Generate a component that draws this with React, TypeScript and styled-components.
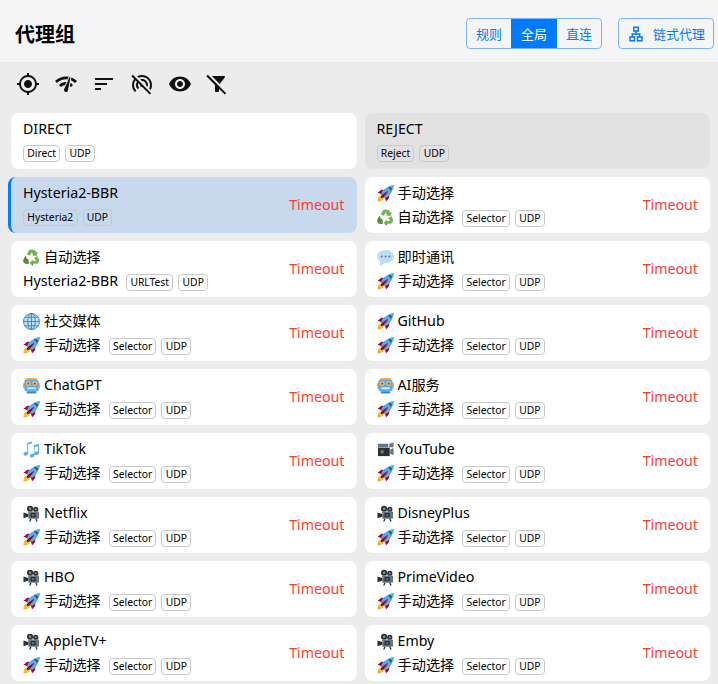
import React from "react";
import styled, { createGlobalStyle } from "styled-components";
import {
  MdMyLocation,
  MdNetworkCheck,
  MdSort,
  MdWifiTetheringOff,
  MdVisibility,
  MdFilterAltOff,
  MdOutlineLan,
} from "react-icons/md";

const GlobalStyle = createGlobalStyle`
  html, body {
    margin: 0;
    padding: 0;
    height: 100%;
    overflow: hidden;
    background: #ececec;
    font-family: "Noto Sans", "Noto Sans CJK SC", sans-serif;
    color: #000;
  }
  * { box-sizing: border-box; }
`;

const Page = styled.div`
  width: 718px;
  height: 684px;
  overflow: hidden;
`;

const Header = styled.header`
  height: 63px;
  background: #f5f5f5;
  border-bottom: 1px solid #e6e6e6;
  display: flex;
  align-items: center;
  padding: 5px 4px 0 15px;
`;

const Title = styled.h1`
  margin: 0;
  font-size: 20px;
  font-weight: 700;
  font-family: "Noto Sans CJK SC", sans-serif;
  flex: 1;
`;

const Segmented = styled.div`
  display: flex;
  height: 31px;
  border: 1px solid rgba(0, 122, 255, 0.5);
  border-radius: 4px;
  overflow: hidden;
  margin-right: 16px;
`;

const Segment = styled.div<{ $active?: boolean }>`
  width: ${({ $active }) => ($active ? "46px" : "44px")};
  display: flex;
  align-items: center;
  justify-content: center;
  font-size: 13px;
  font-family: "Noto Sans CJK SC", sans-serif;
  color: ${({ $active }) => ($active ? "#fff" : "#007aff")};
  background: ${({ $active }) => ($active ? "#007aff" : "transparent")};
`;

const ChainButton = styled.div`
  width: 96px;
  height: 31px;
  display: flex;
  align-items: center;
  gap: 8px;
  padding-left: 8px;
  border: 1px solid rgba(0, 122, 255, 0.5);
  border-radius: 4px;
  color: #007aff;
  font-size: 13px;
  font-family: "Noto Sans CJK SC", sans-serif;
  white-space: nowrap;
`;

const Toolbar = styled.div`
  display: flex;
  align-items: center;
  height: 42px;
  padding-left: 9.5px;
`;

const ToolButton = styled.div`
  width: 37.8px;
  display: flex;
  justify-content: center;
  color: #111;
`;

const Grid = styled.div`
  display: grid;
  grid-template-columns: 1fr 1fr;
  column-gap: 5px;
  row-gap: 8px;
  padding: 8px 8px 0;
`;

const Card = styled.div<{ $selected?: boolean; $hover?: boolean }>`
  height: 56px;
  margin-left: ${({ $selected }) => ($selected ? "0" : "3px")};
  padding: 4px 12px;
  border-left: ${({ $selected }) => ($selected ? "3px solid #007aff" : "0")};
  border-radius: 8px;
  background: ${({ $selected, $hover }) =>
    $selected ? "#c8d9ee" : $hover ? "#e2e2e2" : "#fff"};
  display: flex;
  align-items: center;
`;

const CardBody = styled.div`
  flex: 1;
  min-width: 0;
`;

const Line = styled.div`
  height: 24px;
  padding-bottom: 2px;
  display: flex;
  align-items: center;
  font-size: 14.2px;
  white-space: nowrap;
`;

const Emoji = styled.svg`
  width: 17px;
  height: 17px;
  margin: 2px 4px 0 0;
  flex-shrink: 0;
`;

const Tags = styled.div<{ $first?: boolean }>`
  display: flex;
  gap: 5px;
  margin-top: ${({ $first }) => ($first ? "2px" : "4px")};
  margin-left: ${({ $first }) => ($first ? "0" : "8px")};
`;

const Tag = styled.span`
  height: 17px;
  padding: 0 3.3px;
  display: flex;
  align-items: center;
  font-size: 10.3px;
  border: 1px solid #c8c8c8;
  border-radius: 4px;
`;

const Delay = styled.div`
  margin-bottom: 2px;
  font-size: 14.2px;
  color: #ff3b30;
`;

type IconName =
  | "rocket"
  | "recycle"
  | "chat"
  | "globe"
  | "robot"
  | "notes"
  | "video"
  | "movie";

const EmojiIcon = ({ name }: { name: IconName }) => (
  <Emoji viewBox="0 0 36 36">
    {name === "rocket" && (
      <>
        <path fill="#A0041E" d="M1 17l8-7 16 1 1 16-7 8s.001-5.999-6-12-12-6-12-6z" />
        <path fill="#FFAC33" d="M.973 35s-.036-7.979 2.985-11S15 21.187 15 21.187 14.999 29 11.999 32c-3 3-11.026 3-11.026 3z" />
        <circle fill="#FFCC4D" cx="9" cy="27" r="4" />
        <path fill="#55ACEE" d="M36 0s-10 0-22 10c-6 5-6 14-4 16s11 2 16-4C36 10 36 0 36 0z" />
        <path fill="#292F33" d="M27 5c-1.6 0-3 1-3.6 2.4.5-.2 1-.4 1.6-.4 2.2 0 4 1.8 4 4 0 .6-.1 1.1-.4 1.6C30 12 31 10.600 31 9c0-2.200-1.800-4-4-4z" />
        <path fill="#A0041E" d="M8 28s0-4 1-5 13-11 14-10-9 13-10 14-5 1-5 1z" />
      </>
    )}
    {name === "recycle" && (
      <>
        <path fill="#77B255" d="M18 1l-5 1-5 9 6 3.500 4.500-7 3 5-3 1.500 10 1 3-9-3 1.500-3-5C23.500 2 21 1 18 1z" />
        <path fill="#3E721D" d="M6 13l-5 9c-1 2-.5 4 1 6l2 2h7v-10l-3 1.500L6 13z" opacity=".9" />
        <path fill="#5C913B" d="M1 24c0 5 3 8 6 8h5v-8l-9-1-2 1z" />
        <path fill="#77B255" d="M34 22l-4-7-6 3.500 3.500 7H21v-3.500l-7 7 7 6V31h8c3 0 6-5 5-9z" />
        <path fill="#3E721D" d="M21 31v4l-5-4h5z" />
      </>
    )}
    {name === "chat" && (
      <>
        <path fill="#BBDDF5" d="M18 2C8 2 0 7.800 0 16c0 4.700 2.700 8.800 7 11.400C6.800 30 5.500 33 3 35c4 0 9-2 12-5 1 .1 2 .2 3 .2 10 0 18-6.200 18-14.200S28 2 18 2z" />
        <circle fill="#66757F" cx="10" cy="16" r="2" />
        <circle fill="#66757F" cx="18" cy="16" r="2" />
        <circle fill="#66757F" cx="26" cy="16" r="2" />
      </>
    )}
    {name === "globe" && (
      <g fill="none" stroke="#3B88C3" strokeWidth="2">
        <circle cx="18" cy="18" r="17" fill="#BBDDF5" />
        <ellipse cx="18" cy="18" rx="8" ry="17" />
        <path d="M18 1v34M1 18h34M4 9h28M4 27h28" />
      </g>
    )}
    {name === "robot" && (
      <>
        <rect fill="#FFAC33" x="0" y="12" width="36" height="12" rx="2" />
        <rect fill="#FFAC33" x="6" y="2" width="24" height="8" rx="3" />
        <rect fill="#55ACEE" x="3" y="6" width="30" height="24" rx="4" />
        <circle fill="#FFCC4D" cx="11" cy="14" r="5" />
        <circle fill="#FFCC4D" cx="25" cy="14" r="5" />
        <circle fill="#DD2E44" cx="11" cy="14" r="2.600" />
        <circle fill="#DD2E44" cx="25" cy="14" r="2.600" />
        <rect fill="#E1E8ED" x="9" y="22" width="18" height="4" />
        <rect fill="#3B88C3" x="8" y="30" width="20" height="5" rx="1" />
      </>
    )}
    {name === "notes" && (
      <g fill="#5DADEC">
        <path d="M9 4l10-3v4L11 7.500V26c0 3-3 5-6 5s-4-2-4-3.500S3.500 23 6 23c1 0 2 .2 3 .6V4z" />
        <path d="M23 9l11-3v19c0 3-3 5-6 5s-4-2-4-3.500 2.500-4.500 5-4.500c1 0 1.500.2 2.500.6V11l-7 2v16c0 3-3 6-6 6s-4-2-4-3.500S17 27 20 27c1 0 2 .2 3 .6V9z" />
      </g>
    )}
    {name === "video" && (
      <>
        <path fill="#292F33" d="M2 14h25v18H2z" />
        <path fill="#66757F" d="M2 6h22v7H2zM26 6l9-3v10h-9z" />
        <path fill="#66757F" d="M28 18l7-3v15l-7-3z" />
        <circle fill="#66757F" cx="11" cy="23" r="4" />
      </>
    )}
    {name === "movie" && (
      <>
        <circle fill="#292F33" cx="15" cy="8" r="6.500" />
        <circle fill="#292F33" cx="27" cy="9" r="5.500" />
        <circle fill="#8899A6" cx="15" cy="8" r="2.600" />
        <circle fill="#8899A6" cx="27" cy="9" r="2.200" />
        <rect fill="#66757F" x="11" y="14" width="23" height="15" rx="2" />
        <rect fill="#292F33" x="16" y="17" width="11" height="9" />
        <rect fill="#66757F" x="19" y="19.500" width="5" height="4" />
        <path fill="#292F33" d="M1 16l3 1 7 2v6l-7 2-3 1z" />
        <path fill="#292F33" d="M15 29h3l-2 6h-3zM26 29h3l2 6h-3z" />
      </>
    )}
  </Emoji>
);

type Group = {
  name: string;
  icon?: IconName;
  now?: string;
  nowIcon?: IconName;
  type: string;
  selected?: boolean;
  hover?: boolean;
  timeout?: boolean;
};

const manual = { now: "手动选择", nowIcon: "rocket" as IconName, type: "Selector", timeout: true };

const groups: Group[] = [
  { name: "DIRECT", type: "Direct" },
  { name: "REJECT", type: "Reject", hover: true },
  { name: "Hysteria2-BBR", type: "Hysteria2", selected: true, timeout: true },
  { name: "手动选择", icon: "rocket", now: "自动选择", nowIcon: "recycle", type: "Selector", timeout: true },
  { name: "自动选择", icon: "recycle", now: "Hysteria2-BBR", type: "URLTest", timeout: true },
  { name: "即时通讯", icon: "chat", ...manual },
  { name: "社交媒体", icon: "globe", ...manual },
  { name: "GitHub", icon: "rocket", ...manual },
  { name: "ChatGPT", icon: "robot", ...manual },
  { name: "AI服务", icon: "robot", ...manual },
  { name: "TikTok", icon: "notes", ...manual },
  { name: "YouTube", icon: "video", ...manual },
  { name: "Netflix", icon: "movie", ...manual },
  { name: "DisneyPlus", icon: "movie", ...manual },
  { name: "HBO", icon: "movie", ...manual },
  { name: "PrimeVideo", icon: "movie", ...manual },
  { name: "AppleTV+", icon: "movie", ...manual },
  { name: "Emby", icon: "movie", ...manual },
];

const toolIcons = [MdMyLocation, MdNetworkCheck, MdSort, MdWifiTetheringOff, MdVisibility, MdFilterAltOff];

export default function App() {
  return (
    <Page>
      <GlobalStyle />
      <Header>
        <Title>代理组</Title>
        <Segmented>
          <Segment>规则</Segment>
          <Segment $active>全局</Segment>
          <Segment>直连</Segment>
        </Segmented>
        <ChainButton>
          <MdOutlineLan size={18} />
          链式代理
        </ChainButton>
      </Header>
      <Toolbar>
        {toolIcons.map((Icon, i) => (
          <ToolButton key={i}>
            <Icon size={24} />
          </ToolButton>
        ))}
      </Toolbar>
      <Grid>
        {groups.map((g) => (
          <Card key={g.name} $selected={g.selected} $hover={g.hover}>
            <CardBody>
              <Line>
                {g.icon && <EmojiIcon name={g.icon} />}
                {g.name}
              </Line>
              <Line>
                {g.nowIcon && <EmojiIcon name={g.nowIcon} />}
                {g.now}
                <Tags $first={!g.now}>
                  <Tag>{g.type}</Tag>
                  <Tag>UDP</Tag>
                </Tags>
              </Line>
            </CardBody>
            {g.timeout && <Delay>Timeout</Delay>}
          </Card>
        ))}
      </Grid>
    </Page>
  );
}
